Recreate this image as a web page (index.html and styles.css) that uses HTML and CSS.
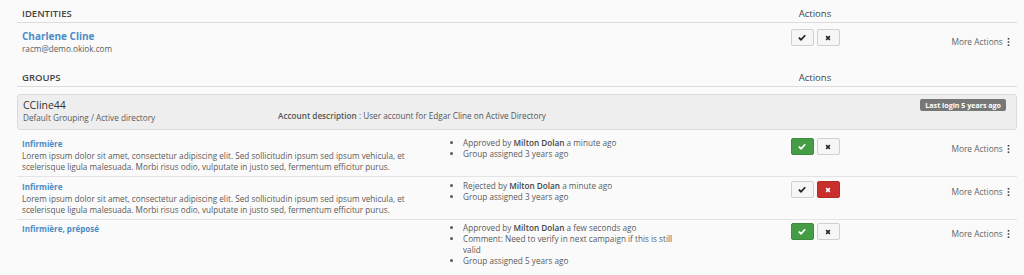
FILE: index.html
```html
<!DOCTYPE html>
<html lang="en">
<head>
  <meta charset="UTF-8">
  <title>Identities and groups</title>
  <link rel="stylesheet" href="styles.css">
</head>
<body>

<div class="page">
  <div class="grid head">
    <div class="head-title">Identities</div>
    <div></div>
    <div class="head-actions">Actions</div>
    <div></div>
  </div>

  <div class="grid identity">
    <div class="who">
      <a class="name" href="#">Charlene Cline</a>
      <div class="mail">racm@demo.okiok.com</div>
    </div>
    <div></div>
    <div class="btns">
      <button class="btn"><svg class="ico" viewBox="0 0 10 8"><polyline points="1,4.2 3.8,6.8 9,1.2"/></svg></button>
      <button class="btn"><svg class="ico x" viewBox="0 0 8 8"><path d="M1.5 1.5L6.5 6.5M6.5 1.5L1.5 6.5"/></svg></button>
    </div>
    <div class="more">More Actions <svg class="kebab" viewBox="0 0 3 10"><rect x="0.5" y="0" width="2" height="2"/><rect x="0.5" y="4" width="2" height="2"/><rect x="0.5" y="8" width="2" height="2"/></svg></div>
  </div>

  <div class="grid head groups-head">
    <div class="head-title">Groups</div>
    <div></div>
    <div class="head-actions">Actions</div>
    <div></div>
  </div>

  <div class="account">
    <div class="acc-id">
      <div class="acc-name">CCline44</div>
      <div class="acc-path">Default Grouping / Active directory</div>
    </div>
    <div class="acc-desc"><b>Account description</b> : User account for Edgar Cline on Active Directory</div>
    <span class="badge">Last login 5 years ago</span>
  </div>

  <div class="grid group">
    <div class="g-info">
      <a class="g-name" href="#">Infirmière</a>
      <p>Lorem ipsum dolor sit amet, consectetur adipiscing elit. Sed sollicitudin ipsum sed ipsum vehicula, et scelerisque ligula malesuada. Morbi risus odio, vulputate in justo sed, fermentum efficitur purus.</p>
    </div>
    <ul class="history">
      <li>Approved by <b>Milton Dolan</b> a minute ago</li>
      <li>Group assigned 3 years ago</li>
    </ul>
    <div class="btns">
      <button class="btn ok"><svg class="ico" viewBox="0 0 10 8"><polyline points="1,4.2 3.8,6.8 9,1.2"/></svg></button>
      <button class="btn"><svg class="ico x" viewBox="0 0 8 8"><path d="M1.5 1.5L6.5 6.5M6.5 1.5L1.5 6.5"/></svg></button>
    </div>
    <div class="more">More Actions <svg class="kebab" viewBox="0 0 3 10"><rect x="0.5" y="0" width="2" height="2"/><rect x="0.5" y="4" width="2" height="2"/><rect x="0.5" y="8" width="2" height="2"/></svg></div>
  </div>

  <div class="grid group">
    <div class="g-info">
      <a class="g-name" href="#">Infirmière</a>
      <p>Lorem ipsum dolor sit amet, consectetur adipiscing elit. Sed sollicitudin ipsum sed ipsum vehicula, et scelerisque ligula malesuada. Morbi risus odio, vulputate in justo sed, fermentum efficitur purus.</p>
    </div>
    <ul class="history">
      <li>Rejected by <b>Milton Dolan</b> a minute ago</li>
      <li>Group assigned 3 years ago</li>
    </ul>
    <div class="btns">
      <button class="btn"><svg class="ico" viewBox="0 0 10 8"><polyline points="1,4.2 3.8,6.8 9,1.2"/></svg></button>
      <button class="btn ko"><svg class="ico x" viewBox="0 0 8 8"><path d="M1.5 1.5L6.5 6.5M6.5 1.5L1.5 6.5"/></svg></button>
    </div>
    <div class="more">More Actions <svg class="kebab" viewBox="0 0 3 10"><rect x="0.5" y="0" width="2" height="2"/><rect x="0.5" y="4" width="2" height="2"/><rect x="0.5" y="8" width="2" height="2"/></svg></div>
  </div>

  <div class="grid group">
    <div class="g-info">
      <a class="g-name" href="#">Infirmière, préposé</a>
    </div>
    <ul class="history">
      <li>Approved by <b>Milton Dolan</b> a few seconds ago</li>
      <li>Comment: Need to verify in next campaign if this is still valid</li>
      <li>Group assigned 5 years ago</li>
    </ul>
    <div class="btns">
      <button class="btn ok"><svg class="ico" viewBox="0 0 10 8"><polyline points="1,4.2 3.8,6.8 9,1.2"/></svg></button>
      <button class="btn"><svg class="ico x" viewBox="0 0 8 8"><path d="M1.5 1.5L6.5 6.5M6.5 1.5L1.5 6.5"/></svg></button>
    </div>
    <div class="more">More Actions <svg class="kebab" viewBox="0 0 3 10"><rect x="0.5" y="0" width="2" height="2"/><rect x="0.5" y="4" width="2" height="2"/><rect x="0.5" y="8" width="2" height="2"/></svg></div>
  </div>
</div>

</body>
</html>
```

FILE: styles.css
```css
body {
  margin: 0;
  background: #fafafa;
  font-family: "Open Sans", "Noto Sans", sans-serif;
  color: #5a5a5a;
  font-size: 8.2px;
  line-height: 11px;
}

.page {
  width: 1000px;
  margin-left: 17px;
  padding-top: 7px;
}

.grid {
  display: grid;
  grid-template-columns: 430px 313px 110px 1fr;
}

/* section headers */
.head {
  border-bottom: 1px solid #dcdcdc;
  padding-bottom: 1px;
  font-size: 9.5px;
  line-height: 14px;
  color: #444;
}

.head-title {
  padding-left: 5px;
  text-transform: uppercase;
  font-weight: 600;
}

.head-actions {
  text-align: center;
}

.groups-head {
  margin-top: 17px;
}

/* identity */
.identity {
  padding-top: 6px;
}

.who {
  padding-left: 5px;
}

.name {
  display: block;
  color: #4a8cc6;
  font-weight: 700;
  font-size: 10px;
  line-height: 14px;
  text-decoration: none;
}

.mail {
  font-size: 8.2px;
}

/* buttons */
.btns {
  display: flex;
  justify-content: center;
  gap: 3px;
  align-self: start;
}

.btn {
  width: 23px;
  height: 17px;
  padding: 0;
  border: 1px solid #d0d0d0;
  border-radius: 2px;
  background: #f6f6f6;
  display: flex;
  align-items: center;
  justify-content: center;
}

.ico {
  width: 8px;
  height: 7px;
  fill: none;
  stroke: #222;
  stroke-width: 2.2;
}

.ico.x {
  width: 6px;
  height: 6px;
  stroke-width: 2;
}

.btn.ok {
  background: #449d44;
  border-color: #3d8b3d;
}

.btn.ko {
  background: #c9302c;
  border-color: #b52b27;
}

.btn.ok .ico,
.btn.ko .ico {
  stroke: #fff;
}

.more {
  text-align: right;
  padding-right: 7px;
  padding-top: 7px;
  font-size: 8.4px;
  color: #666;
}

.kebab {
  width: 3px;
  height: 8px;
  margin-left: 2px;
  fill: #444;
  vertical-align: -1px;
}

/* account card */
.account {
  display: flex;
  margin-top: 7px;
  background: #eeeeee;
  border: 1px solid #dadada;
  border-radius: 3px;
  padding: 3px 10px 6px 5px;
}

.acc-id {
  width: 255px;
}

.acc-name {
  font-size: 10.5px;
  line-height: 14px;
  color: #333;
}

.acc-desc {
  align-self: flex-end;
  margin-bottom: 2px;
  color: #555;
}

.acc-desc b {
  font-weight: 600;
}

.badge {
  margin-left: auto;
  align-self: flex-start;
  margin-top: 1px;
  background: #777;
  color: #fff;
  font-weight: 700;
  font-size: 7.1px;
  line-height: 12px;
  padding: 0 5px;
  border-radius: 2px;
}

/* group rows */
.group {
  padding: 3px 0 4px;
}

.account + .group {
  margin-top: 4px;
}

.group + .group {
  border-top: 1px solid #e4e4e4;
}

.group:last-child {
  padding-top: 2px;
}

.g-info {
  padding: 0 20px 0 5px;
}

.g-name {
  display: block;
  color: #4a8cc6;
  font-weight: 700;
  font-size: 8px;
  line-height: 13px;
  text-decoration: none;
}

.g-info p {
  margin: 0;
}

.history {
  margin: 0;
  padding: 0 0 0 16px;
  width: 220px;
  list-style: disc;
}

.history b {
  font-weight: 600;
  color: #444;
}

.group .btns {
  margin-top: 1px;
}

.group .more {
  padding-top: 6px;
}
```
